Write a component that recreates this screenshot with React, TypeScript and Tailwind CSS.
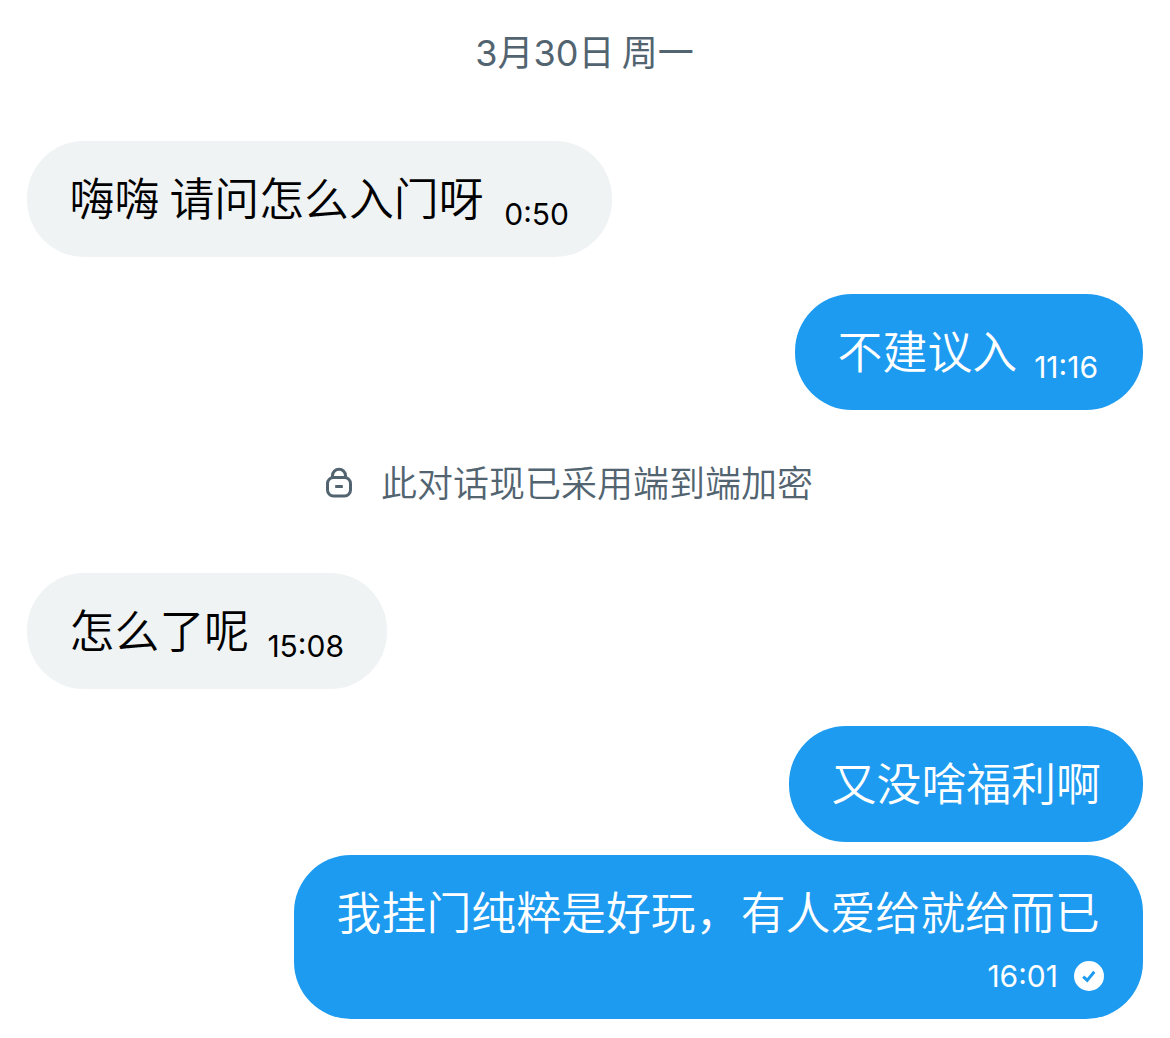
import type { ReactNode } from 'react';

type BubbleProps = {
  side: 'in' | 'out';
  className: string;
  children: ReactNode;
};

function Bubble({ side, className, children }: BubbleProps) {
  const look = side === 'in' ? 'self-start bg-[#eff3f4] text-black' : 'self-end bg-[#1d9bf0] text-white';
  return <div className={`flex rounded-[57px] px-[43px] ${look} ${className}`}>{children}</div>;
}

function Body({ children }: { children: ReactNode }) {
  return (
    <p className="-ml-[0.4px] whitespace-pre font-['Noto_Sans_CJK_SC',sans-serif] text-[44.9px] leading-[111px] font-[350]">
      {children}
    </p>
  );
}

function Time({ className, children }: { className?: string; children: ReactNode }) {
  return (
    <time className={`font-['Inter',sans-serif] text-[30px] leading-[36px] ${className ?? ''}`}>
      {children}
    </time>
  );
}

function LockIcon() {
  return (
    <svg className="h-[32px] w-[28px] shrink-0" viewBox="0 0 28 32" fill="none" stroke="#536471" strokeWidth="3">
      <rect x="2.5" y="10.5" width="23" height="18.5" rx="6" />
      <path d="M7.5 10.5V8.7a6.5 6.5 0 0 1 13 0v1.8M10.2 19.4h7.6" />
    </svg>
  );
}

function SentIcon() {
  return (
    <svg className="size-[30px] shrink-0" viewBox="0 0 30 30" fill="none">
      <circle cx="15" cy="15" r="15" fill="#fff" />
      <path d="M9.2 15.6l4 3.8 7.1-8.6" stroke="#1d9bf0" strokeWidth="3" />
    </svg>
  );
}

export default function App() {
  return (
    <main className="flex h-[1038px] w-[1170px] flex-col overflow-hidden bg-white px-[27px]">
      <div className="flex h-[141px] justify-center pt-[28px] pr-[1px] font-['Inter','Noto_Sans_CJK_SC',sans-serif] text-[36px] leading-[50px] whitespace-pre text-[#536471] [word-spacing:-3px]">
        3月30日 周一
      </div>

      <Bubble side="in" className="h-[116px] w-[585px] justify-between">
        <Body>嗨嗨 请问怎么入门呀</Body>
        <Time className="mt-[55px]">0:50</Time>
      </Bubble>

      <Bubble side="out" className="mt-[37px] h-[116px] w-[348px] justify-between">
        <Body>不建议入</Body>
        <Time className="mt-[55px] mr-[2px]">11:16</Time>
      </Bubble>

      <div className="flex h-[163px] items-center pb-[18px] pl-[298px] font-['Noto_Sans_CJK_SC',sans-serif] text-[36px] leading-[50px] text-[#536471]">
        <LockIcon />
        <span className="mb-[4px] ml-[28px] font-[350]">此对话现已采用端到端加密</span>
      </div>

      <Bubble side="in" className="h-[116px] w-[360px] justify-between">
        <Body>怎么了呢</Body>
        <Time className="mt-[55px]">15:08</Time>
      </Bubble>

      <Bubble side="out" className="mt-[37px] h-[116px] w-[354px]">
        <Body>又没啥福利啊</Body>
      </Bubble>

      <Bubble side="out" className="mt-[13px] h-[164px] w-[849px] flex-col">
        <Body>我挂门纯粹是好玩，有人爱给就给而已</Body>
        <div className="mt-[-8px] mr-[-4px] flex items-center justify-end gap-[16px]">
          <Time>16:01</Time>
          <SentIcon />
        </div>
      </Bubble>
    </main>
  );
}
